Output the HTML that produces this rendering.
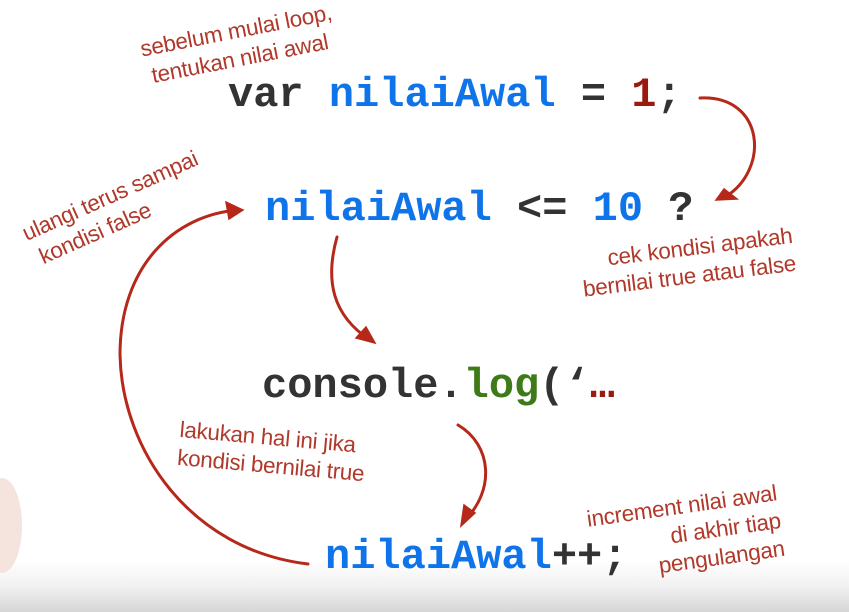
<!DOCTYPE html>
<html><head><meta charset="utf-8"><style>
html,body{margin:0;padding:0}
body{width:849px;height:612px;position:relative;overflow:hidden;background:linear-gradient(#fff 0,#fff 560px,#f2f2f2 585px,#d6d6d6 612px);font-family:"Liberation Sans",sans-serif}
.c{position:absolute;font-family:"Liberation Mono",monospace;font-weight:bold;font-size:42px;line-height:1;white-space:pre;color:#333}
.b{color:#0f74ea}.r{color:#9b1a0e}.g{color:#3e7a17}
.a{position:absolute;color:#b0392b;font-size:22.5px;line-height:28px;white-space:pre;transform-origin:left top;letter-spacing:-0.3px}
</style></head><body>
<div style="position:absolute;left:-18px;top:478px;width:40px;height:95px;border-radius:50%;background:#f4e4dd"></div>
<div class="c" style="left:228px;top:74px">var <span class="b">nilaiAwal</span> = <span class="r">1</span>;</div>
<div class="c" style="left:265px;top:188px"><span class="b">nilaiAwal</span> &lt;= <span class="b">10</span> ?</div>
<div class="c" style="left:262px;top:365px">console.<span class="g">log</span>(‘<span class="r">…</span></div>
<div class="c" style="left:325px;top:536px"><span class="b">nilaiAwal</span>++;</div>

<div class="a" style="left:138px;top:36px;transform:rotate(-11deg)">sebelum mulai loop,
 tentukan nilai awal</div>
<div class="a" style="left:18px;top:222px;transform:rotate(-24deg)">ulangi terus sampai
 kondisi false</div>
<div class="a" style="left:578px;top:248px;transform:rotate(-7deg);text-align:right"> cek kondisi apakah
bernilai true atau false</div>
<div class="a" style="left:181px;top:416px;transform:rotate(5deg)">lakukan hal ini jika
kondisi bernilai true</div>
<div class="a" style="left:585px;top:506px;transform:rotate(-8deg);text-align:right">increment nilai awal
di akhir tiap
pengulangan</div>

<svg width="849" height="612" style="position:absolute;left:0;top:0" fill="none" stroke="#b5281a" stroke-width="3" stroke-linecap="round">
<path d="M700,98 C765,95 770,170 725,197"/>
<path d="M716,200 L737,199 L724,189 Z" fill="#b5281a" stroke-width="1.5"/>
<path d="M337,237 C325,280 332,315 370,340"/>
<path d="M375,343 L356,338 L366,327 Z" fill="#b5281a" stroke-width="1.5"/>
<path d="M458,425 C492,445 495,490 465,520"/>
<path d="M461,526 L464,505 L475,513 Z" fill="#b5281a" stroke-width="1.5"/>
<path d="M308,564 C190,550 122,450 120,355 C120,265 175,215 238,210"/>
<path d="M243,210 L226,202 L229,219 Z" fill="#b5281a" stroke-width="1.5"/>
</svg>
</body></html>
